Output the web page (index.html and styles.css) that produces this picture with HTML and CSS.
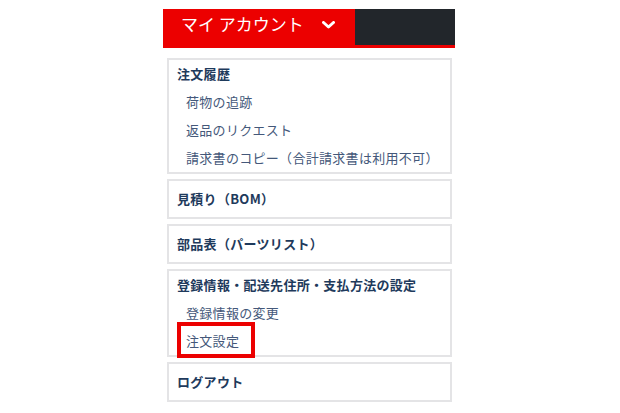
FILE: index.html
```html
<!DOCTYPE html>
<html lang="ja">
<head>
  <meta charset="UTF-8" />
  <title>マイアカウント</title>
  <link rel="stylesheet" href="styles.css">
</head>
<body>
  <div class="account-menu">
    <div class="account-bar">
      <div class="account-btn">
        <span>マイ アカウント</span>
        <svg class="chevron" width="13" height="8" viewBox="0 0 13 8">
          <polyline points="1.5,1.5 6.5,6 11.5,1.5" fill="none" stroke="#fff" stroke-width="3" stroke-linecap="round" stroke-linejoin="round" />
        </svg>
      </div>
      <div class="account-rest"></div>
    </div>

    <div class="menu-list">
      <div class="menu-box">
        <div class="menu-title">注文履歴</div>
        <div class="sub-item">荷物の追跡</div>
        <div class="sub-item">返品のリクエスト</div>
        <div class="sub-item">請求書のコピー（合計請求書は利用不可）</div>
      </div>

      <div class="menu-box single">
        <div class="menu-title">見積り（BOM）</div>
      </div>

      <div class="menu-box single">
        <div class="menu-title">部品表（パーツリスト）</div>
      </div>

      <div class="menu-box">
        <div class="menu-title">登録情報・配送先住所・支払方法の設定</div>
        <div class="sub-item">登録情報の変更</div>
        <div class="sub-item marked">注文設定</div>
      </div>

      <div class="menu-box single">
        <div class="menu-title">ログアウト</div>
      </div>
    </div>
  </div>
</body>
</html>
```

FILE: styles.css
```css
:root {
  --red: #ec0000;
  --dark: #22262b;
  --navy: #1e3a5c;
  --slate: #44587a;
  --line: #e4e4e6;
}

body {
  margin: 0;
  background-color: #ffffff;
  font-family: "Noto Sans CJK JP", "Noto Sans", sans-serif;
}

.account-menu {
  width: 292px;
  margin: 9px 0 0 163px;
}

.account-bar {
  display: flex;
  border-bottom: 3px solid var(--red);
}

.account-btn {
  display: flex;
  align-items: center;
  width: 192px;
  height: 36px;
  padding: 0 0 6px 18px;
  box-sizing: border-box;
  background-color: var(--red);
  color: #ffffff;
  font-size: 17px;
  line-height: 30px;
}

.chevron {
  margin-left: 18px;
  margin-top: 2px;
}

.account-rest {
  flex: 1;
  background-color: var(--dark);
}

.menu-list {
  display: flex;
  flex-direction: column;
  gap: 5px;
  margin: 10px 3px 0 4px;
}

.menu-box {
  border: 2px solid var(--line);
  padding: 0 8px;
}

.menu-box.single {
  padding: 4px 8px;
}

.menu-title {
  color: var(--navy);
  font-size: 13px;
  font-weight: bold;
  letter-spacing: 0.3px;
  line-height: 28px;
}

.sub-item {
  padding-left: 9px;
  color: var(--slate);
  font-size: 13px;
  letter-spacing: 0.3px;
  line-height: 28px;
}

.sub-item.marked {
  position: relative;
}

.sub-item.marked::after {
  content: '';
  position: absolute;
  left: 0;
  top: -5px;
  width: 78px;
  height: 36px;
  border: 4px solid var(--red);
  box-sizing: border-box;
}
```
